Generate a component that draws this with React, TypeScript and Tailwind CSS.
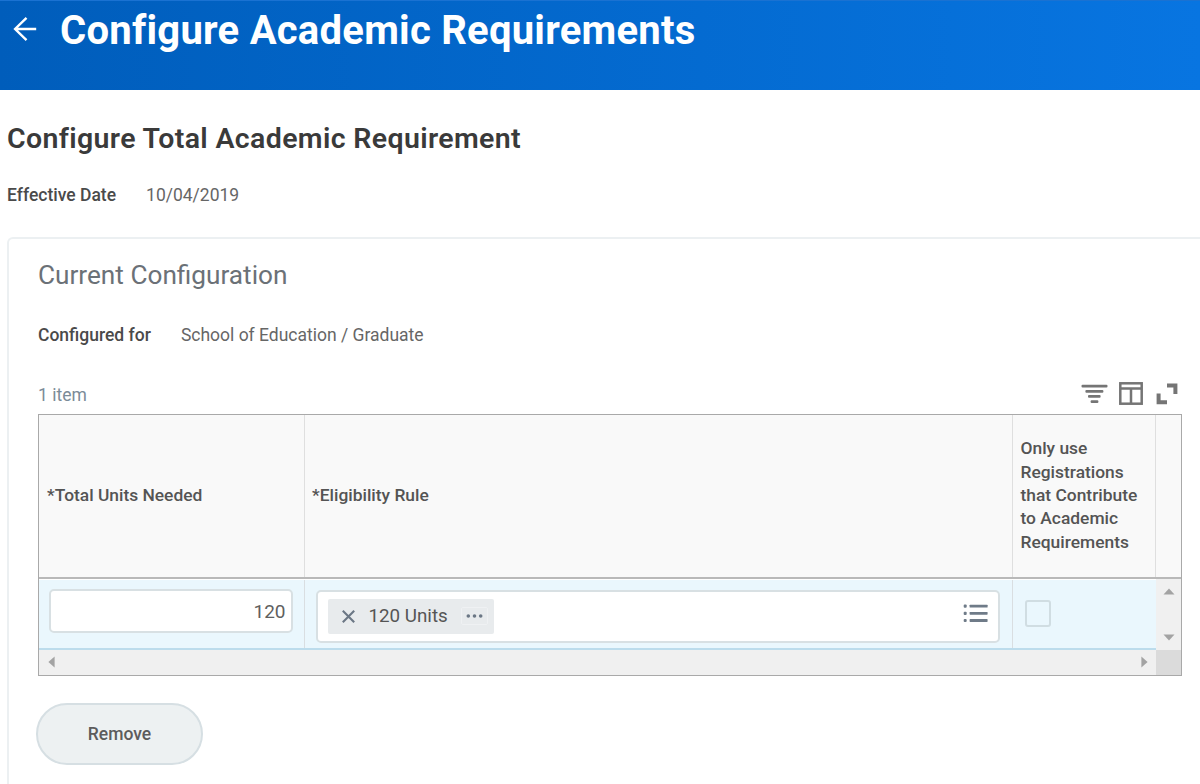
function BackArrow() {
  return (
    <svg width="24" height="26" viewBox="0 0 24 26" fill="none" stroke="white" strokeWidth="2.4">
      <path d="M23.2 13H2M13.5 1.8L2.1 13L13.5 24.2" />
    </svg>
  );
}

function FilterIcon() {
  return (
    <svg width="27" height="20" viewBox="0 0 27 20" fill="#757575">
      <rect x="0.5" y="0.8" width="26" height="2.7" rx="1" />
      <rect x="4.4" y="6" width="18" height="2.7" rx="1" />
      <rect x="7" y="11.1" width="12.6" height="2.7" rx="1" />
      <rect x="9.6" y="16.2" width="7.8" height="2.7" rx="1" />
    </svg>
  );
}

function ColumnsIcon() {
  return (
    <svg width="24" height="23" viewBox="0 0 24 23" fill="none" stroke="#757575" strokeWidth="2.5">
      <rect x="1.3" y="1.3" width="21.4" height="20.4" />
      <path d="M1 6.6H23M12 6.6V22" />
    </svg>
  );
}

function ExpandIcon() {
  return (
    <svg width="22" height="22" viewBox="0 0 22 22" fill="none" stroke="#757575" strokeWidth="4">
      <path d="M11 2.6H19.4V11" />
      <path d="M2.6 10.6V19.2H11" />
    </svg>
  );
}

function ListIcon() {
  return (
    <svg width="25" height="19" viewBox="0 0 25 19" fill="#6f7b88">
      <rect x="0.7" y="0.5" width="3" height="3.2" rx="1" />
      <rect x="6.6" y="0.7" width="18" height="2.8" rx="0.6" />
      <rect x="0.7" y="7.7" width="3" height="3.2" rx="1" />
      <rect x="6.6" y="7.9" width="18" height="2.8" rx="0.6" />
      <rect x="0.7" y="14.9" width="3" height="3.2" rx="1" />
      <rect x="6.6" y="15.1" width="18" height="2.8" rx="0.6" />
    </svg>
  );
}

function Field({ label, value, className }: { label: string; value: string; className: string }) {
  return (
    <div className={`flex h-6 items-center text-[17.5px] leading-6 whitespace-nowrap ${className}`}>
      <span className="font-medium text-[#4a4a4a]">{label}</span>
      <span className="text-[#666]">{value}</span>
    </div>
  );
}

export default function App() {
  return (
    <div className="flex h-[784px] w-[1200px] flex-col overflow-hidden bg-white font-[Roboto,sans-serif] text-[#333]">
      <header className="flex h-[90px] shrink-0 items-start border-t border-[#1a72d2] bg-linear-to-r from-[#005dbb] to-[#0875e1] pl-[13px]">
        <div className="mt-[15px]">
          <BackArrow />
        </div>
        <h1 className="mt-[6px] ml-[23px] text-[40px] leading-[48px] font-bold tracking-[0.25px] whitespace-nowrap text-white">
          Configure Academic Requirements
        </h1>
      </header>

      <main className="flex grow flex-col pl-[7px]">
        <h2 className="mt-[33px] text-[28.5px] leading-8 font-semibold tracking-[0.35px] whitespace-nowrap text-[#3a3a3a]">
          Configure Total Academic Requirement
        </h2>
        <Field label="Effective Date" value="10/04/2019" className="mt-[28px] gap-[30px]" />

        <section className="mt-[30px] -mr-2 grow rounded-tl-[6px] border-2 border-r-0 border-b-0 border-[#ecf0f2] pl-[29px]">
          <h3 className="mt-[20px] text-[26.2px] leading-8 whitespace-nowrap text-[#6b7177]">
            Current Configuration
          </h3>
          <Field
            label="Configured for"
            value="School of Education / Graduate"
            className="mt-[32px] gap-[30px]"
          />

          <div className="mt-[33px] flex h-[34px] w-[1144px] items-start justify-between pr-[4.5px]">
            <span className="mt-[3px] text-[17.5px] leading-6 text-[#7b8b98]">1 item</span>
            <div className="mt-[2px] flex items-center">
              <div className="mr-[11px]">
                <FilterIcon />
              </div>
              <div className="mr-[13px]">
                <ColumnsIcon />
              </div>
              <ExpandIcon />
            </div>
          </div>

          <div className="h-[262px] w-[1144px] border border-[#a9a9a9] bg-[#f0f0f0] text-[17.4px]">
            <div className="flex h-[163.5px] border-b-2 border-[#b9b9b9] bg-[#f9f9f9] leading-[23.4px] font-medium text-[#545454]">
              <div className="flex w-[265.5px] items-center border-r border-[#dfdfdf] pl-[8px]">
                *Total Units Needed
              </div>
              <div className="flex w-[708px] items-center border-r border-[#dfdfdf] pl-[7.5px]">
                *Eligibility Rule
              </div>
              <div className="flex w-[143.5px] items-center border-r border-[#dfdfdf] pl-[8px]">
                <span>
                  Only use
                  <br />
                  Registrations
                  <br />
                  that Contribute
                  <br />
                  to Academic
                  <br />
                  Requirements
                </span>
              </div>
            </div>

            <div className="flex h-[71px]">
              <div className="flex h-full w-[1117px] border-t border-b-2 border-t-white border-b-[#bcdcec] bg-[#eaf7fd]">
                <div className="w-[265.5px] border-r border-[#d9dee1] pt-[9px] pl-[10px]">
                  <div className="flex h-[44px] w-[244px] items-center justify-end rounded-[5px] border-2 border-[#d8e0e3] bg-white pt-[3px] pr-[5.5px] text-[19px] text-[#606060]">
                    120
                  </div>
                </div>
                <div className="w-[708px] border-r border-[#d9dee1] pt-[10px] pl-[11px]">
                  <div className="flex h-[53px] w-[684px] items-center justify-between rounded-[5px] border-2 border-[#d8e0e3] bg-white pr-[10px] pl-[10px]">
                    <div className="flex h-[35px] w-[166px] items-center rounded-[2px] bg-[#e8ebed] pl-[14px]">
                      <svg width="13" height="13" viewBox="0 0 13 13" stroke="#6b7785" strokeWidth="2.1">
                        <path d="M0.8 0.8L12.2 12.2M12.2 0.8L0.8 12.2" />
                      </svg>
                      <span className="ml-[14px] text-[18.8px] whitespace-nowrap text-[#555]">120 Units</span>
                      <span className="ml-[13px] flex h-[18px] w-[27px] items-center justify-center rounded-[2px] border border-[#eff1f3]">
                        <svg width="17" height="4" viewBox="0 0 17 4" fill="#6b7785">
                          <circle cx="2.3" cy="2" r="1.8" />
                          <circle cx="8.5" cy="2" r="1.8" />
                          <circle cx="14.7" cy="2" r="1.8" />
                        </svg>
                      </span>
                    </div>
                    <div className="-mt-[5px]">
                      <ListIcon />
                    </div>
                  </div>
                </div>
                <div className="pt-[20px] pl-[12px]">
                  <div className="h-[27px] w-[26px] rounded-[3px] border-2 border-[#d0dde2]" />
                </div>
              </div>
              <div className="flex grow flex-col items-center justify-between pt-[9px] pb-[9px]">
                <svg width="12" height="7" viewBox="0 0 12 7" fill="#a3a3a3">
                  <path d="M0.5 6.6L6 0.4L11.5 6.6Z" />
                </svg>
                <svg width="12" height="7" viewBox="0 0 12 7" fill="#a3a3a3">
                  <path d="M0.5 0.4L6 6.6L11.5 0.4Z" />
                </svg>
              </div>
            </div>

            <div className="flex h-[25.5px]">
              <div className="flex w-[1117px] items-center justify-between pr-[8px] pl-[9px]">
                <svg width="7" height="12" viewBox="0 0 7 12" fill="#a3a3a3">
                  <path d="M6.6 0.5L0.4 6L6.6 11.5Z" />
                </svg>
                <svg width="7" height="12" viewBox="0 0 7 12" fill="#a3a3a3">
                  <path d="M0.4 0.5L6.6 6L0.4 11.5Z" />
                </svg>
              </div>
              <div className="grow bg-[#dbdbdb]" />
            </div>
          </div>

          <button className="mt-[27px] -ml-[2px] flex h-[62px] w-[167px] items-center justify-center rounded-full border-2 border-[#d6dfe3] bg-[#edf1f2] text-[17.5px] font-medium text-[#5c5c5c]">
            Remove
          </button>
        </section>
      </main>
    </div>
  );
}
